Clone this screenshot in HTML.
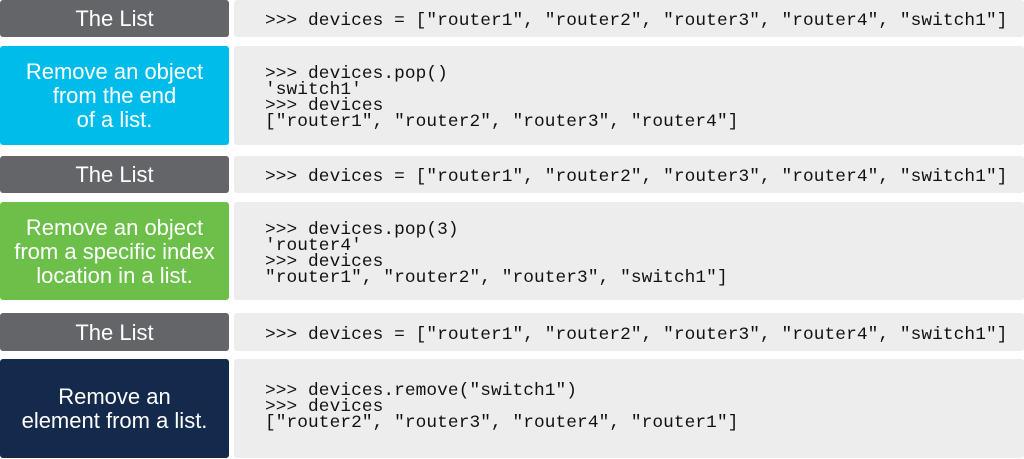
<!DOCTYPE html>
<html><head><style>
body{margin:0;width:1024px;height:459px;background:#fff;position:relative;overflow:hidden}
.l,.r{position:absolute;border-radius:3px}
.l{left:0;width:229px;color:#fff;font-family:"Liberation Sans",sans-serif;font-size:22px;line-height:24px;display:flex;align-items:center;justify-content:center;text-align:center;padding-top:1px;box-sizing:border-box}
.r{left:234px;width:790px;background:#ededed;font-family:"Liberation Mono",monospace;font-size:17.8px;letter-spacing:0.09px;line-height:16px;color:#111;white-space:pre;display:flex;align-items:center;padding-left:31px;padding-top:5px;box-sizing:border-box}
.g{background:#646569}
</style></head><body>
<div class="l g" style="top:0;height:37px">The List</div>
<div class="r" style="top:0;height:37px">&gt;&gt;&gt; devices = ["router1", "router2", "router3", "router4", "switch1"]</div>
<div class="l" style="top:46px;height:99px;background:#00bceb">Remove an object<br>from the end<br>of a list.</div>
<div class="r" style="top:46px;height:99px">&gt;&gt;&gt; devices.pop()
'switch1'
&gt;&gt;&gt; devices
["router1", "router2", "router3", "router4"]</div>
<div class="l g" style="top:156px;height:37px">The List</div>
<div class="r" style="top:156px;height:37px">&gt;&gt;&gt; devices = ["router1", "router2", "router3", "router4", "switch1"]</div>
<div class="l" style="top:202px;height:98px;background:#6cc04a">Remove an object<br>from a specific index<br>location in a list.</div>
<div class="r" style="top:202px;height:98px">&gt;&gt;&gt; devices.pop(3)
'router4'
&gt;&gt;&gt; devices
"router1", "router2", "router3", "switch1"]</div>
<div class="l g" style="top:313px;height:38px">The List</div>
<div class="r" style="top:313px;height:38px">&gt;&gt;&gt; devices = ["router1", "router2", "router3", "router4", "switch1"]</div>
<div class="l" style="top:359px;height:99px;background:#142a4c">Remove an<br>element from a list.</div>
<div class="r" style="top:359px;height:99px;padding-top:0;padding-bottom:4px">&gt;&gt;&gt; devices.remove("switch1")
&gt;&gt;&gt; devices
["router2", "router3", "router4", "router1"]</div>
</body></html>
